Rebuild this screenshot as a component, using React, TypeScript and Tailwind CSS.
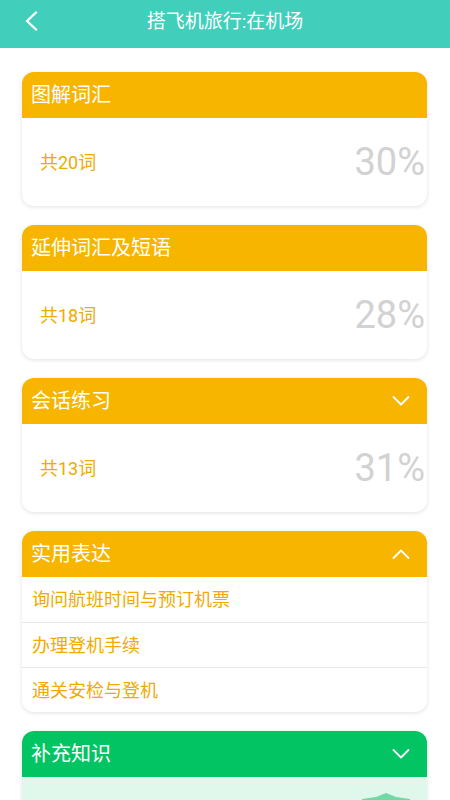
import React from "react";

const Chevron = ({ up = false }: { up?: boolean }) => (
  <svg width="18" height="10" viewBox="0 0 18 10" fill="none">
    {up ? (
      <polyline points="1.5,9 9,1.5 16.5,9" stroke="white" strokeWidth="1.8" strokeLinecap="round" strokeLinejoin="round" />
    ) : (
      <polyline points="1.5,1 9,8.5 16.5,1" stroke="white" strokeWidth="1.8" strokeLinecap="round" strokeLinejoin="round" />
    )}
  </svg>
);

const Header = ({ title, color = "bg-[#f7b500]", chevron }: { title: string; color?: string; chevron?: "up" | "down" }) => (
  <div className={`${color} h-[46px] flex items-center justify-between pl-[9px] pr-[17px]`}>
    <span className="text-white text-[20px] leading-none">{title}</span>
    {chevron && <Chevron up={chevron === "up"} />}
  </div>
);

const StatCard = ({ title, count, pct, chevron }: { title: string; count: string; pct: string; chevron?: "up" | "down" }) => (
  <div className="rounded-[12px] overflow-hidden bg-white shadow-[0_1px_4px_rgba(0,0,0,0.12)]">
    <Header title={title} chevron={chevron} />
    <div className="h-[88px] flex items-center justify-between pl-[18px] pr-[2px]">
      <span className="text-[#f0aa00] text-[18px]">{count}</span>
      <span className="text-[#d2d2d2] text-[38px] leading-none">{pct}</span>
    </div>
  </div>
);

export default function App() {
  return (
    <div className="w-[450px] h-[800px] overflow-hidden bg-white" style={{ fontFamily: "Roboto, 'Noto Sans CJK SC', sans-serif" }}>
      <div className="h-[48px] bg-[#41cfbb] flex items-center relative">
        <svg className="absolute left-[24px] top-[11px]" width="14" height="20" viewBox="0 0 14 20" fill="none">
          <polyline points="12,1.5 3,10 12,18.5" stroke="white" strokeWidth="2.4" strokeLinecap="round" strokeLinejoin="round" />
        </svg>
        <div className="w-full text-center text-white text-[19px] pb-[4px]">搭飞机旅行:在机场</div>
      </div>
      <div className="pl-[22px] pr-[23px] pt-[24px] flex flex-col gap-[19px]">
        <StatCard title="图解词汇" count="共20词" pct="30%" />
        <StatCard title="延伸词汇及短语" count="共18词" pct="28%" />
        <StatCard title="会话练习" count="共13词" pct="31%" chevron="down" />
        <div className="rounded-[12px] overflow-hidden bg-white shadow-[0_1px_4px_rgba(0,0,0,0.12)]">
          <Header title="实用表达" chevron="up" />
          {["询问航班时间与预订机票", "办理登机手续", "通关安检与登机"].map((t, i) => (
            <div key={t} className={`h-[45px] flex items-center pl-[10px] text-[#f0aa00] text-[18px] ${i > 0 ? "border-t border-[#e8e8e8]" : ""}`}>
              {t}
            </div>
          ))}
        </div>
        <div className="rounded-t-[12px] overflow-hidden bg-white shadow-[0_1px_4px_rgba(0,0,0,0.12)]">
          <Header title="补充知识" color="bg-[#02c463]" chevron="down" />
          <div className="h-[80px] bg-[#e0f7ec] relative">
            <svg className="absolute left-[340px] top-[16px]" width="50" height="20" viewBox="0 0 50 20">
              <path d="M0 6 L14 4 L24 0 L34 4 L48 6 L50 20 L0 20 Z" fill="#6fdaa3" />
            </svg>
          </div>
        </div>
      </div>
    </div>
  );
}
